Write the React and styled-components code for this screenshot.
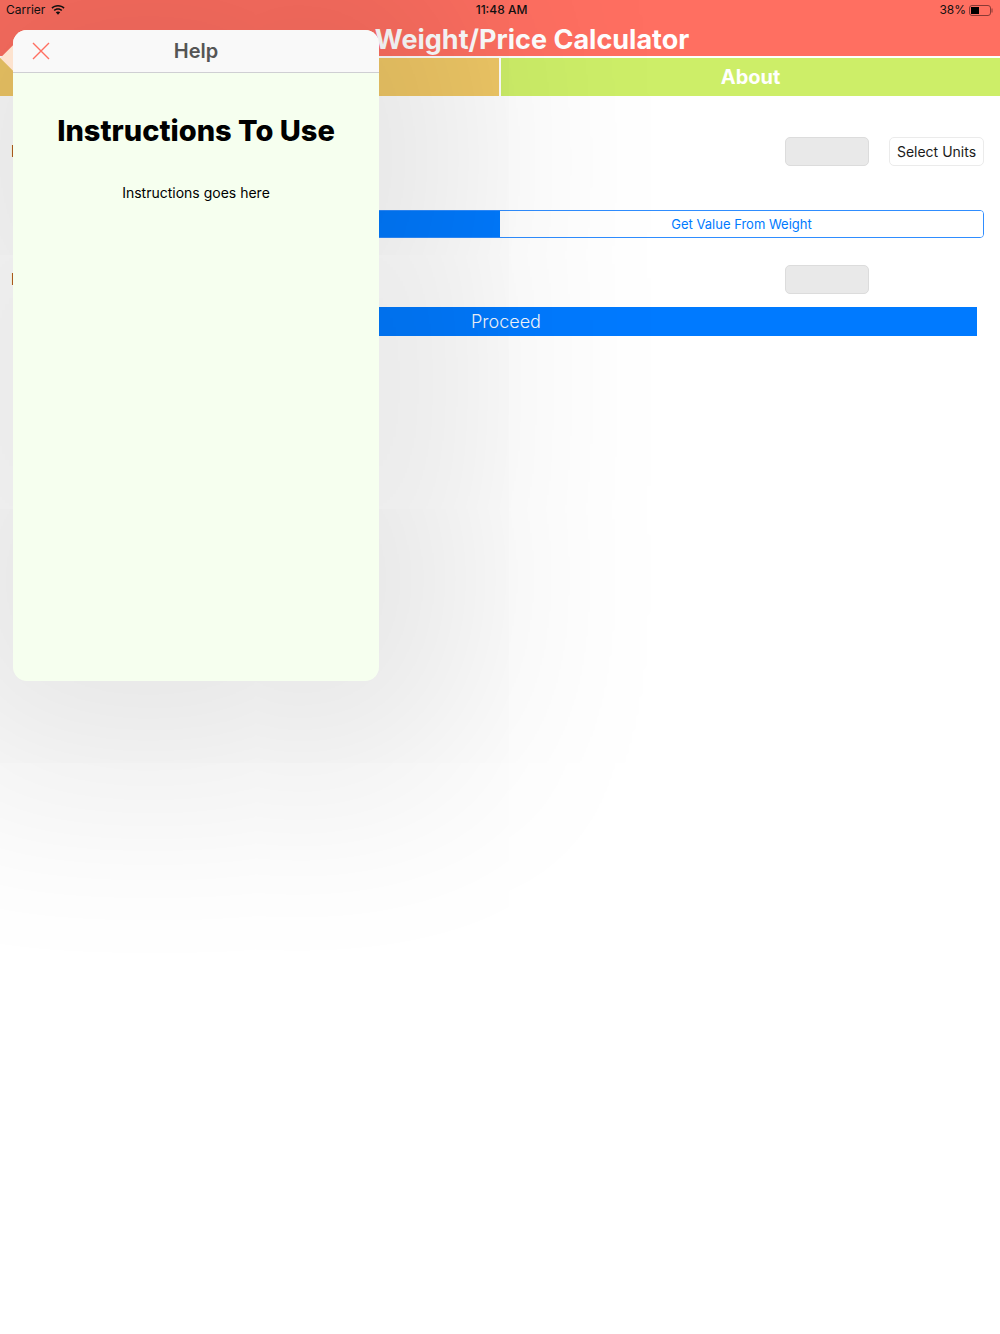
import React from "react";
import styled, { createGlobalStyle } from "styled-components";

const GlobalStyle = createGlobalStyle`
  html, body {
    margin: 0;
    height: 1334px;
    overflow: hidden;
    background: #fff;
    font-family: Inter, "Liberation Sans", sans-serif;
  }
`;

const Page = styled.div`
  position: relative;
  width: 1000px;
  height: 1334px;
  overflow: hidden;
  background: #fff;
`;

const Header = styled.header`
  height: 56px;
  background: #ff6f61;
`;

const StatusBar = styled.div`
  height: 20px;
  padding: 0 7px 0 6px;
  display: grid;
  grid-template-columns: 1fr auto 1fr;
  align-items: center;
  font-size: 12px;
  line-height: 20px;
  color: #111;
`;

const StatusLeft = styled.div`
  display: flex;
  align-items: center;
  gap: 6px;
  font-weight: 400;
`;

const StatusTime = styled.div`
  font-weight: 500;
  padding-left: 4px;
`;

const StatusRight = styled.div`
  display: flex;
  align-items: center;
  justify-content: flex-end;
  gap: 3px;
`;

const Title = styled.h1`
  margin: 0;
  padding-left: 64px;
  text-align: center;
  font-size: 27px;
  line-height: 40px;
  font-weight: 700;
  color: #fff;
`;

const Tabs = styled.nav`
  margin-top: 2px;
  display: grid;
  grid-template-columns: 499px 499px;
  column-gap: 2px;
`;

const Tab = styled.div`
  height: 38px;
  display: flex;
  align-items: center;
  justify-content: center;
  background: ${(props) => props.$color};
  color: #fff;
  font-size: 20px;
  font-weight: 700;
`;

const Content = styled.main`
  padding: 38px 16px 0 11px;
`;

const FieldRow = styled.div`
  display: grid;
  grid-template-columns: 1fr 84px 95px;
  column-gap: 20px;
  align-items: center;
  height: 29px;
`;

const FieldLabel = styled.span`
  font-size: 16px;
  line-height: 34px;
  color: #000;
`;

const ValueBox = styled.div`
  height: 29px;
  box-sizing: border-box;
  background: #e9e9e9;
  border: 1px solid #dcdcdc;
  border-radius: 5px;
`;

const UnitsButton = styled.button`
  height: 29px;
  padding: 0;
  background: #fff;
  border: 1px solid #ebebeb;
  border-radius: 5px;
  color: #1a1a1a;
  font: 400 14px Inter, "Liberation Sans", sans-serif;
`;

const Segments = styled.div`
  margin: 47px 0 24px 5px;
  height: 28px;
  box-sizing: border-box;
  display: grid;
  grid-template-columns: 1fr 1fr;
  border: 1px solid #2f8dff;
  border-radius: 4px;
  overflow: hidden;
`;

const Segment = styled.div`
  display: flex;
  align-items: center;
  justify-content: center;
  background: ${(props) => (props.$active ? "#007aff" : "#fff")};
  color: #007aff;
  font-size: 13px;
`;

const ProceedButton = styled.button`
  display: block;
  width: 942px;
  height: 29px;
  margin: 16px 0 0 24px;
  padding: 0;
  border: 0;
  background: #007aff;
  color: #f4f8ff;
  font: 300 18px Inter, "Liberation Sans", sans-serif;
`;

const Popover = styled.aside`
  position: absolute;
  left: 13px;
  top: 30px;
  width: 366px;
  height: 651px;
  display: flex;
  flex-direction: column;
  border-radius: 14px;
  background: #f6ffef;
  box-shadow: 0 0 200px 100px rgba(0, 0, 0, 0.1);

  &::before {
    content: "";
    position: absolute;
    left: -9px;
    top: 19px;
    width: 18px;
    height: 18px;
    background: #fde3cf;
    transform: rotate(45deg);
  }
`;

const PopoverHeader = styled.div`
  position: relative;
  flex: none;
  height: 42px;
  display: flex;
  align-items: center;
  justify-content: center;
  border-bottom: 1px solid #cfcfd3;
  border-radius: 14px 14px 0 0;
  background: #f9f9f9;
  color: #555;
  font-size: 20px;
  font-weight: 600;
`;

const CloseIcon = styled.svg`
  position: absolute;
  left: 19px;
  top: 12px;
`;

const PopoverBody = styled.div`
  flex: 1;
  padding-top: 40px;
  text-align: center;
  color: #000;
`;

const Heading = styled.h2`
  margin: 0;
  font-size: 29px;
  line-height: 36px;
  font-weight: 800;
`;

const Instructions = styled.p`
  margin: 34px 0 0;
  font-size: 14px;
  line-height: 20px;
`;

const WifiIcon = () => (
  <svg width="14" height="10" viewBox="0 0 14 10" fill="#111">
    <path d="M7 0C4.4 0 2.1 1 .4 2.6l1.1 1.2C2.9 2.4 4.8 1.6 7 1.6s4.1.8 5.5 2.2l1.1-1.2C11.9 1 9.6 0 7 0z" />
    <path d="M7 3.2c-1.7 0-3.2.7-4.3 1.7l1.1 1.2C4.6 5.3 5.8 4.8 7 4.8s2.4.5 3.2 1.3l1.1-1.2C10.2 3.9 8.7 3.2 7 3.2z" />
    <path d="M7 6.4c-.9 0-1.6.3-2.2.9L7 9.8l2.2-2.5c-.6-.6-1.3-.9-2.2-.9z" />
  </svg>
);

const BatteryIcon = () => (
  <svg width="24" height="11" viewBox="0 0 24 11">
    <rect x="0.5" y="0.5" width="21" height="10" rx="2.5" fill="none" stroke="#8a3a35" />
    <rect x="2" y="2" width="8" height="7" fill="#000" />
    <rect x="22.5" y="3.5" width="1" height="4" fill="#8a3a35" />
  </svg>
);

export default function App() {
  return (
    <Page>
      <GlobalStyle />
      <Header>
        <StatusBar>
          <StatusLeft>
            Carrier
            <WifiIcon />
          </StatusLeft>
          <StatusTime>11:48 AM</StatusTime>
          <StatusRight>
            38%
            <BatteryIcon />
          </StatusRight>
        </StatusBar>
        <Title>Weight/Price Calculator</Title>
      </Header>
      <Tabs>
        <Tab $color="#f0c866" />
        <Tab $color="#cdee68">About</Tab>
      </Tabs>
      <Content>
        <FieldRow>
          <FieldLabel>I</FieldLabel>
          <ValueBox />
          <UnitsButton>Select Units</UnitsButton>
        </FieldRow>
        <Segments>
          <Segment $active />
          <Segment>Get Value From Weight</Segment>
        </Segments>
        <FieldRow>
          <FieldLabel>I</FieldLabel>
          <ValueBox />
        </FieldRow>
        <ProceedButton>Proceed</ProceedButton>
      </Content>
      <Popover>
        <PopoverHeader>
          Help
          <CloseIcon width="18" height="18" viewBox="0 0 18 18" fill="none" stroke="#ff6f61" strokeWidth="1.4">
            <path d="M1 1l16 16M17 1L1 17" />
          </CloseIcon>
        </PopoverHeader>
        <PopoverBody>
          <Heading>Instructions To Use</Heading>
          <Instructions>Instructions goes here</Instructions>
        </PopoverBody>
      </Popover>
    </Page>
  );
}
